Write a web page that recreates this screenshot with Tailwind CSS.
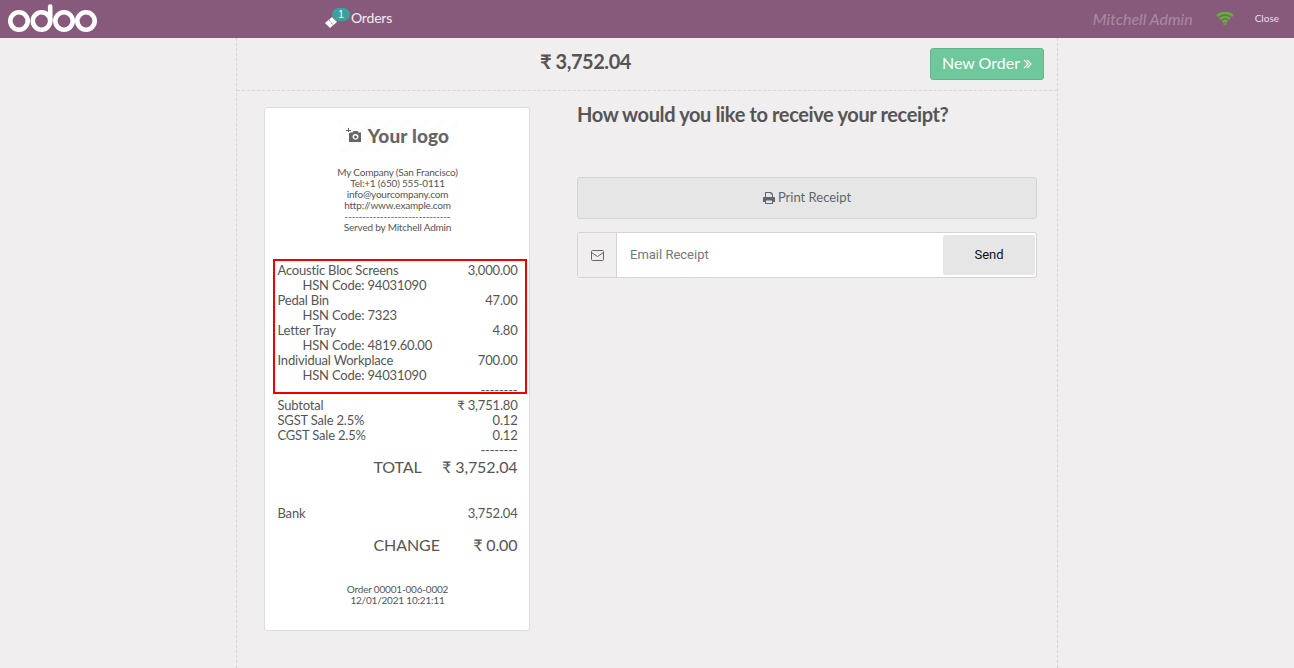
<!DOCTYPE html>
<html>
<head>
<meta charset="utf-8">
<script src="https://cdn.jsdelivr.net/npm/@tailwindcss/browser@4"></script>
</head>
<body class="w-[1294px] h-[668px] overflow-hidden bg-[#f0eeee] font-['Lato','Noto_Sans',sans-serif] text-[#555555]">
<header class="h-[38px] bg-[#875a7b] relative flex items-center text-white">
  <svg class="ml-[8px] w-[90px] h-[38px] shrink-0" viewBox="0 0 90 38" fill="none" stroke="white" stroke-width="4.6">
    <circle cx="11" cy="21" r="8.700" />
    <circle cx="33.500" cy="21" r="8.700" />
    <path d="M42.200 21V6.500" stroke-linecap="round"/>
    <circle cx="56" cy="21" r="8.700" />
    <circle cx="78" cy="21" r="8.700" />
  </svg>
  <div class="ml-[226px] relative flex items-center h-full">
    <svg class="w-[16px] h-[14px] mt-[3px]" viewBox="0 0 16 14"><path fill="white" d="M1 9l7-6 5 5-7 6z"/><path stroke="#875a7b" stroke-width="1" stroke-dasharray="1 1" d="M5 6l4 5"/></svg>
    <span class="absolute left-[8px] top-[8px] h-[13px] w-[18px] rounded-full bg-[#3aa29b] text-[10px] leading-[13px] text-center text-white font-['Liberation_Sans',sans-serif]">1</span>
    <span class="ml-[11px] text-[14px] tracking-[-0.2px] leading-none text-[#f2ecf0] mt-[-3px]">Orders</span>
  </div>
  <div class="ml-auto flex items-center h-full">
    <span class="italic text-[16px] text-white/30 mr-[23px]">Mitchell Admin</span>
    <svg class="w-[18px] h-[14px] mr-[21px] mt-[-2px]" viewBox="0 0 18 14" fill="none" stroke="#5cb531" stroke-width="2.400"><path d="M1 5c4.500-4 11.500-4 16 0"/><path d="M3.800 8c3-2.500 7.400-2.500 10.400 0"/><path d="M6.500 10.800c1.500-1.200 3.500-1.200 5 0"/><circle cx="9" cy="13" r="0.400" fill="#5cb531"/></svg>
    <span class="text-[10px] text-[#e8dfe6] mr-[15px] mt-[-2px]">Close</span>
  </div>
</header>

<main class="relative w-[822px] h-[630px] ml-[236px] border-x border-dashed border-[#d6d4d4]">
  <div class="h-[53px] border-b border-dashed border-[#d9d7d7] relative flex items-center justify-end pr-[13px]">
    <div class="absolute left-[303px] top-[9px] text-[20px] tracking-[-0.45px] leading-[28px] font-bold text-[#555555]">₹ 3,752.04</div>
    <button class="w-[114px] h-[32px] mt-[-1px] rounded-[3px] bg-[#6ec89b] border border-[#62b68c] text-white text-[16px] leading-none flex items-center justify-center">
      <span class="mt-[-2px]">New Order</span>
      <svg class="ml-[3px] w-[9px] h-[10px]" viewBox="0 0 9 10" fill="none" stroke="white" stroke-width="1.100"><path d="M1 1l4 4-4 4M4 1l4 4-4 4"/></svg>
    </button>
  </div>

  <div class="flex items-start pl-[27px]">
    <article class="relative mt-[16px] w-[266px] h-[524px] bg-white border border-[#dcdcdc] rounded-[3px] pl-[12.500px] pr-[11.500px] text-[13px] tracking-[-0.19px] leading-[15px] text-[#555555]">
      <div class="absolute left-[72px] top-[12px] w-[120px] h-[32px] bg-[repeating-linear-gradient(135deg,#fdfdfd_0,#fdfdfd_6px,#ffffff_6px,#ffffff_12px)]"></div>
      <div class="relative h-[39px] pt-[15px] flex items-center justify-center gap-[6px]">
        <svg class="w-[16px] h-[15px]" viewBox="0 0 16 15"><path fill="#666666" fill-rule="evenodd" d="M2 0h1v2h2v1H3v1H2V3H0V2h2zM4 4.500h2.500L7.500 3h4l1 1.500h2.500V14H3V5.500zM9.500 5.800a3 3 0 1 0 .01 0zM9.500 7.400a1.500 1.500 0 1 1-.01 0z"/></svg>
        <span class="text-[19px] leading-none font-black text-[#666666] tracking-[0.15px]">Your logo</span>
      </div>
      <div class="mt-[20px] text-center text-[10px] leading-[11px]">
        <div>My Company (San Francisco)</div>
        <div>Tel:+1 (650) 555-0111</div>
        <div>info@yourcompany.com</div>
        <div>http://www.example.com</div>
        <div>------------------------------</div>
        <div>Served by Mitchell Admin</div>
      </div>
      <div class="mt-[30px]">
        <div class="flex justify-between"><span>Acoustic Bloc Screens</span><span>3,000.00</span></div>
        <div class="pl-[25px]">HSN Code: 94031090</div>
        <div class="flex justify-between"><span>Pedal Bin</span><span>47.00</span></div>
        <div class="pl-[25px]">HSN Code: 7323</div>
        <div class="flex justify-between"><span>Letter Tray</span><span>4.80</span></div>
        <div class="pl-[25px]">HSN Code: 4819.60.00</div>
        <div class="flex justify-between"><span>Individual Workplace</span><span>700.00</span></div>
        <div class="pl-[25px]">HSN Code: 94031090</div>
        <div class="text-right">--------</div>
        <div class="flex justify-between"><span>Subtotal</span><span>₹ 3,751.80</span></div>
        <div class="flex justify-between"><span>SGST Sale 2.5%</span><span>0.12</span></div>
        <div class="flex justify-between"><span>CGST Sale 2.5%</span><span>0.12</span></div>
        <div class="text-right">--------</div>
      </div>
      <div class="ml-auto w-[144px] flex justify-between mt-[-2px] text-[16px] tracking-[-0.1px] leading-[21px]"><span>TOTAL</span><span>₹ 3,752.04</span></div>
      <div class="flex justify-between mt-[29px]"><span>Bank</span><span>3,752.04</span></div>
      <div class="ml-auto w-[144px] flex justify-between mt-[13px] text-[16px] tracking-[-0.1px] leading-[21px]"><span>CHANGE</span><span>₹ 0.00</span></div>
      <div class="mt-[29px] text-center text-[10px] leading-[11px]">
        <div>Order 00001-006-0002</div>
        <div>12/01/2021 10:21:11</div>
      </div>
      <div class="absolute left-[8px] top-[151px] w-[254px] h-[135px] border-2 border-[#ee0000]"></div>
    </article>

    <section class="ml-[47px] w-[460px]">
      <h2 class="mt-[9px] text-[20px] tracking-[-0.37px] leading-[28px] font-bold text-[#555555]">How would you like to receive your receipt?</h2>
      <button class="mt-[49px] w-full h-[42px] bg-[#e6e6e6] border border-[#d4d4d4] rounded-[3px] flex items-center justify-center gap-[3px] text-[13px] text-[#5f6670]">
        <svg class="w-[12px] h-[12px]" viewBox="0 0 12 12"><path fill="currentColor" d="M2 0h6l2 2v3h1c.6 0 1 .4 1 1v4H10v2H2v-2H0V6c0-.6.4-1 1-1h1zM3 1v4h6V2.500H7.500V1zM3 8.500V11h6V8.500z" fill-rule="evenodd"/></svg>
        <span>Print Receipt</span>
      </button>
      <div class="mt-[13px] h-[46px] flex border border-[#d4d4d4] rounded-[3px] overflow-hidden bg-white">
        <div class="w-[39px] shrink-0 bg-[#f0eeee] border-r border-[#d4d4d4] flex items-center justify-center">
          <svg class="w-[13px] h-[11px]" viewBox="0 0 13 11" fill="none" stroke="#666" stroke-width="1"><rect x=".5" y=".5" width="12" height="10" rx="1"/><path d="M.5 2.500l6 4 6-4"/></svg>
        </div>
        <div class="flex-1 pl-[13px] flex items-center text-[13px] text-[#777777] font-['Roboto',sans-serif]">Email Receipt</div>
        <div class="w-[92px] h-[40px] mt-[2px] mr-[1px] bg-[#e6e6e6] rounded-[3px] flex items-center justify-center text-[13px] text-[#111111] font-['Roboto',sans-serif]">Send</div>
      </div>
    </section>
  </div>
</main>
</body>
</html>
